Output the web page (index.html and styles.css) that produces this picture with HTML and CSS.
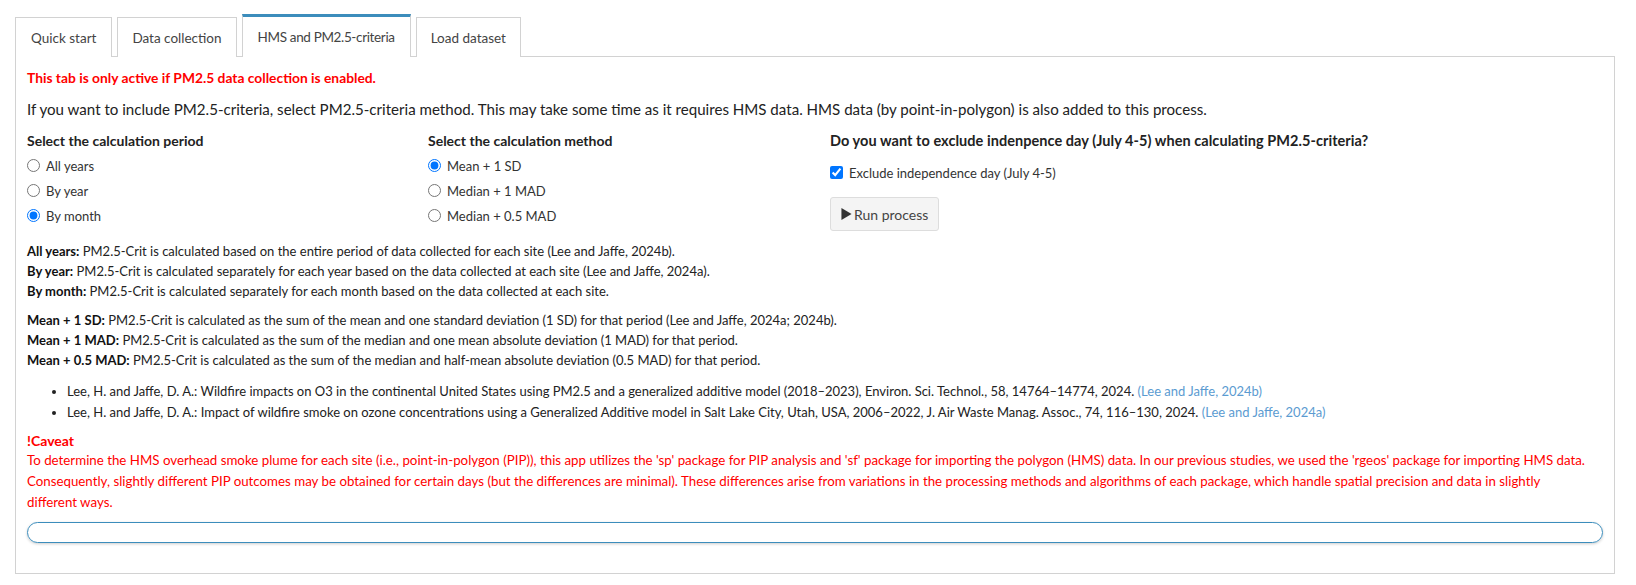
FILE: index.html
```html
<!DOCTYPE html>
<html lang="en">
<head>
<meta charset="utf-8">
<title>HMS and PM2.5-criteria</title>
<link rel="stylesheet" href="styles.css">
</head>
<body>
<div class="page">
  <ul class="tabs">
    <li class="tab">Quick start</li>
    <li class="tab">Data collection</li>
    <li class="tab active">HMS and PM2.5-criteria</li>
    <li class="tab">Load dataset</li>
  </ul>
  <div class="panel">
    <p class="warn">This tab is only active if PM2.5 data collection is enabled.</p>
    <p class="lead">If you want to include PM2.5-criteria, select PM2.5-criteria method. This may take some time as it requires HMS data. HMS data (by point-in-polygon) is also added to this process.</p>
    <div class="row">
      <div class="col">
        <div class="label">Select the calculation period</div>
        <label class="opt first"><input type="radio" name="period"><span>All years</span></label>
        <label class="opt"><input type="radio" name="period"><span>By year</span></label>
        <label class="opt"><input type="radio" name="period" checked><span>By month</span></label>
      </div>
      <div class="col">
        <div class="label">Select the calculation method</div>
        <label class="opt first"><input type="radio" name="method" checked><span>Mean + 1 SD</span></label>
        <label class="opt"><input type="radio" name="method"><span>Median + 1 MAD</span></label>
        <label class="opt"><input type="radio" name="method"><span>Median + 0.5 MAD</span></label>
      </div>
      <div class="col">
        <div class="label label-wide">Do you want to exclude indenpence day (July 4-5) when calculating PM2.5-criteria?</div>
        <label class="opt check"><input type="checkbox" checked><span>Exclude independence day (July 4-5)</span></label>
        <button class="btn" type="button"><svg class="play" viewBox="0 0 12 14" width="11" height="14"><path d="M0.5 0.5 L11.5 7 L0.5 13.5 Z" fill="#333"/></svg>Run process</button>
      </div>
    </div>
    <div class="notes notes-first">
      <div><b>All years:</b> PM2.5-Crit is calculated based on the entire period of data collected for each site (Lee and Jaffe, 2024b).</div>
      <div><b>By year:</b> PM2.5-Crit is calculated separately for each year based on the data collected at each site (Lee and Jaffe, 2024a).</div>
      <div><b>By month:</b> PM2.5-Crit is calculated separately for each month based on the data collected at each site.</div>
    </div>
    <div class="notes notes-second">
      <div><b>Mean + 1 SD:</b> PM2.5-Crit is calculated as the sum of the mean and one standard deviation (1 SD) for that period (Lee and Jaffe, 2024a; 2024b).</div>
      <div><b>Mean + 1 MAD:</b> PM2.5-Crit is calculated as the sum of the median and one mean absolute deviation (1 MAD) for that period.</div>
      <div><b>Mean + 0.5 MAD:</b> PM2.5-Crit is calculated as the sum of the median and half-mean absolute deviation (0.5 MAD) for that period.</div>
    </div>
    <ul class="refs">
      <li>Lee, H. and Jaffe, D. A.: Wildfire impacts on O3 in the continental United States using PM2.5 and a generalized additive model (2018–2023), Environ. Sci. Technol., 58, 14764–14774, 2024. <a href="#">(Lee and Jaffe, 2024b)</a></li>
      <li>Lee, H. and Jaffe, D. A.: Impact of wildfire smoke on ozone concentrations using a Generalized Additive model in Salt Lake City, Utah, USA, 2006–2022, J. Air Waste Manag. Assoc., 74, 116–130, 2024. <a href="#">(Lee and Jaffe, 2024a)</a></li>
    </ul>
    <div class="caveat">
      <div class="caveat-title">!Caveat</div>
      <p>To determine the HMS overhead smoke plume for each site (i.e., point-in-polygon (PIP)), this app utilizes the 'sp' package for PIP analysis and 'sf' package for importing the polygon (HMS) data. In our previous studies, we used the 'rgeos' package for importing HMS data. Consequently, slightly different PIP outcomes may be obtained for certain days (but the differences are minimal). These differences arise from variations in the processing methods and algorithms of each package, which handle spatial precision and data in slightly<br>different ways.</p>
    </div>
    <div class="bar"></div>
  </div>
</div>
</body>
</html>
```

FILE: styles.css
```css
* { box-sizing: border-box; }

body {
  margin: 0;
  background: #fff;
  color: #333;
  font-family: "Source Sans Pro", Lato, "Liberation Sans", sans-serif;
  font-size: 14px;
}

.page {
  padding: 14px 21px 0 15px;
}

.tabs {
  list-style: none;
  margin: 0;
  padding: 0;
  display: flex;
  align-items: flex-end;
  gap: 5px;
  border-bottom: 1px solid #d2d2d2;
}

.tab {
  height: 40px;
  padding: 0 14px;
  display: flex;
  align-items: center;
  border: 1px solid #d2d2d2;
  border-bottom: none;
  margin-bottom: -1px;
  background: #fff;
  color: #444;
  font-size: 13.5px;
}

.tab:first-child {
  padding: 0 15px;
}

.tab.active {
  height: 43px;
  border-top: 3px solid #3c8dbc;
  padding: 0 15px;
  letter-spacing: -0.35px;
}

.panel {
  border: 1px solid #d2d2d2;
  border-top: none;
  padding: 11px 11px 30px 11px;
  height: 517px;
}

.warn {
  margin: 0;
  color: #ff0000;
  font-weight: 700;
  font-size: 13.8px;
  line-height: 20px;
}

.lead {
  margin: 10px 0 0 0;
  font-size: 15.1px;
  line-height: 22px;
  color: #222;
}

.row {
  display: grid;
  grid-template-columns: 401px 402px 1fr;
  margin-top: 11px;
}

.label {
  font-weight: 700;
  font-size: 14px;
  line-height: 20px;
  color: #222;
}

.label-wide {
  font-size: 14.5px;
  letter-spacing: 0.05px;
}

.opt {
  display: flex;
  align-items: center;
  height: 25px;
  font-size: 13px;
  color: #333;
}

.opt.first {
  margin-top: 2px;
}

.opt input {
  margin: 0 6px 0 0;
  width: 13px;
  height: 13px;
}

.check {
  margin-top: 9px;
}

.btn {
  margin-top: 12px;
  height: 34px;
  width: 109px;
  padding: 0 8px 0 10px;
  display: flex;
  align-items: center;
  gap: 2px;
  border: 1px solid #ddd;
  border-radius: 3px;
  background: #f4f4f4;
  color: #444;
  font-family: inherit;
  font-size: 14px;
}

.play {
  display: block;
}

.notes {
  font-size: 13px;
  line-height: 20px;
  color: #222;
}

.notes-first {
  margin-top: 10px;
}

.notes-second {
  margin-top: 9px;
}

.notes b {
  color: #111;
}

.refs {
  margin: 11px 0 0 0;
  padding-left: 40px;
  font-size: 13px;
  line-height: 21px;
  color: #222;
}

.refs a {
  color: #5b9bd1;
  text-decoration: none;
}

.caveat {
  margin-top: 8px;
  color: #ff0000;
  font-size: 13.3px;
}

.caveat-title {
  font-weight: 700;
  font-size: 14px;
  line-height: 19px;
}

.caveat p {
  margin: 0;
  line-height: 21px;
}

.bar {
  margin-top: 9px;
  height: 21px;
  border: 1.5px solid #3c8dbc;
  border-radius: 11px;
  box-shadow: 0 1px 3px rgba(0, 0, 0, 0.2);
}
```
